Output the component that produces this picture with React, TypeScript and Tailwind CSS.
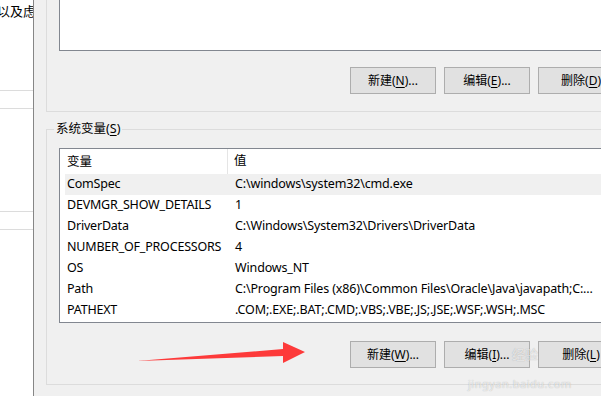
import React from 'react';

const rows: [string, string][] = [
  ['ComSpec', 'C:\\windows\\system32\\cmd.exe'],
  ['DEVMGR_SHOW_DETAILS', '1'],
  ['DriverData', 'C:\\Windows\\System32\\Drivers\\DriverData'],
  ['NUMBER_OF_PROCESSORS', '4'],
  ['OS', 'Windows_NT'],
  ['Path', 'C:\\Program Files (x86)\\Common Files\\Oracle\\Java\\javapath;C:...'],
  ['PATHEXT', '.COM;.EXE;.BAT;.CMD;.VBS;.VBE;.JS;.JSE;.WSF;.WSH;.MSC'],
];

function Btn({ label, hot, rest }: { label: string; hot: string; rest: string }) {
  return (
    <div className="flex h-[27px] w-[86px] shrink-0 items-center justify-center border border-[#adadad] bg-[#e1e1e1] text-[12px] text-black">
      {label}(<span className="underline underline-offset-2">{hot}</span>){rest}
    </div>
  );
}

export default function App() {
  return (
    <div
      className="relative flex h-[396px] w-[601px] overflow-hidden bg-[#f0f0f0]"
      style={{ fontFamily: '"Noto Sans", "Noto Sans CJK SC", sans-serif' }}
    >
      {/* window behind */}
      <div className="relative w-[33px] shrink-0 overflow-hidden bg-white">
        <div className="ml-[-3px] mt-[2px] whitespace-nowrap text-[13px] text-black">以及虑</div>
        <div className="mt-[68px] h-px bg-[#dcdcdc]" />
        <div className="mt-[17px] h-px bg-[#dcdcdc]" />
        <div className="mt-[102px] h-px bg-[#dcdcdc]" />
        <div className="mt-[17px] h-px bg-[#dcdcdc]" />
      </div>
      <div className="w-px shrink-0 bg-[#868686]" />

      {/* environment variables dialog */}
      <div className="flex w-[640px] shrink-0 flex-col pl-[12px]">
        {/* user variables group */}
        <div className="flex flex-col border-b border-l border-[#dcdcdc] pb-[17px] pl-[12px]">
          <div className="h-[51px] border-b border-l border-[#828790] bg-white" />
          <div className="ml-[291px] mt-[16px] flex gap-[8px]">
            <Btn label="新建" hot="N" rest="..." />
            <Btn label="编辑" hot="E" rest="..." />
            <Btn label="删除" hot="D" rest="" />
          </div>
        </div>

        {/* system variables group */}
        <div className="mt-[17px] flex flex-col border-b border-l border-t border-[#dcdcdc] pb-[16px] pl-[12px]">
          <div className="-ml-[5px] -mt-[10px] w-fit bg-[#f0f0f0] px-[2px] text-[12.5px] leading-[18px] text-black">
            系统变量(<span className="underline underline-offset-2">S</span>)
          </div>
          <div className="mt-[10px] flex flex-col border border-r-0 border-[#828790] bg-white pb-[1px] pl-[5px] text-[12.5px] text-black">
            <div className="flex h-[25px] items-center">
              <div className="h-full w-[163px] border-r border-[#e5e5e5] pl-[2px] leading-[25px]">变量</div>
              <div className="pl-[6px]">值</div>
            </div>
            {rows.map(([k, v], i) => (
              <div key={k} className={`flex h-[21px] items-center ${i === 0 ? 'bg-[#f0f0f0]' : ''}`}>
                <div className="w-[163px] whitespace-nowrap pl-[2px] tracking-[-0.2px]">{k}</div>
                <div className="whitespace-nowrap pl-[7px] tracking-[-0.15px]">{v}</div>
              </div>
            ))}
          </div>
          <div className="ml-[291px] mt-[18px] flex gap-[8px]">
            <Btn label="新建" hot="W" rest="..." />
            <Btn label="编辑" hot="I" rest="..." />
            <Btn label="删除" hot="L" rest="" />
          </div>
        </div>
      </div>

      {/* red arrow annotation */}
      <svg className="pointer-events-none absolute left-0 top-0" width="601" height="396">
        <polygon points="137,361 283,349 283,342 305,352 283,363 283,356" fill="#fd3a3a" />
      </svg>

      {/* watermark */}
      <div className="pointer-events-none absolute left-[512px] top-[345px] text-[13px] text-white/70 [text-shadow:0_0_1px_rgba(0,0,0,0.3)]">
        经验
      </div>
      <div className="pointer-events-none absolute left-[468px] top-[376px] text-[11px] tracking-[0.5px] text-white/70 [text-shadow:0_0_1px_rgba(0,0,0,0.3)]">
        jingyan.baidu.com
      </div>
    </div>
  );
}
